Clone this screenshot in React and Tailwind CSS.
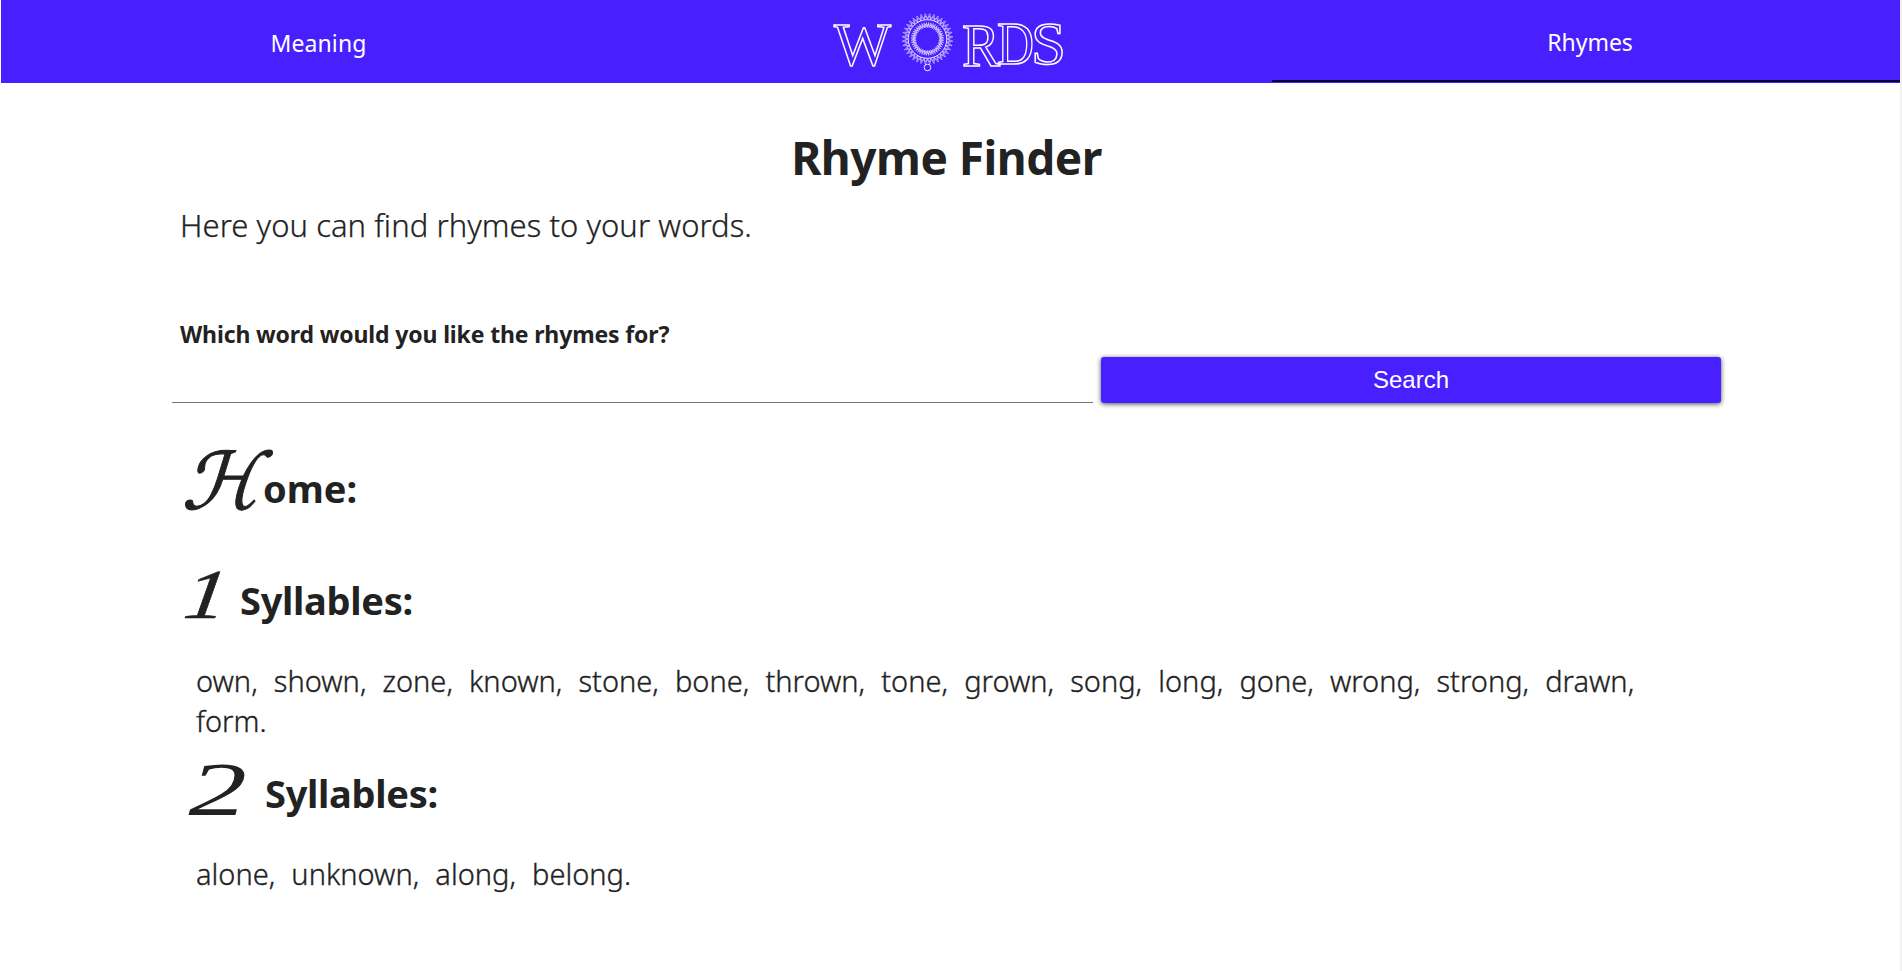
const oneSyllable = [
  "own", "shown", "zone", "known", "stone", "bone", "thrown", "tone",
  "grown", "song", "long", "gone", "wrong", "strong", "drawn", "form",
];
const twoSyllables = ["alone", "unknown", "along", "belong"];

// Closed zigzag around a centre, alternating between two radii.
function burst(cx, cy, inner, outer, count) {
  const points = [];
  for (let i = 0; i < count * 2; i++) {
    const radius = i % 2 === 0 ? inner : outer;
    const angle = (Math.PI * i) / count;
    points.push(
      `${(cx + radius * Math.cos(angle)).toFixed(2)},${(cy + radius * Math.sin(angle)).toFixed(2)}`
    );
  }
  return points.join(" ");
}

function Logo() {
  return (
    <svg
      viewBox="820 0 268 83"
      className="h-[83px] w-[268px] fill-none stroke-white stroke-[1.5]"
      aria-label="Words"
    >
      <g className="font-['Liberation_Serif',serif] text-[62px]">
        <text x="834" y="65" textLength="57" lengthAdjust="spacingAndGlyphs">W</text>
        <text x="962" y="66" textLength="38" lengthAdjust="spacingAndGlyphs">R</text>
        <text x="997" y="64" textLength="37" lengthAdjust="spacingAndGlyphs">D</text>
        <text x="1031" y="64" textLength="35" lengthAdjust="spacingAndGlyphs">S</text>
      </g>
      <g className="stroke-[0.5]">
        <polygon points={burst(927.5, 39, 20.5, 25.5, 36)} />
        <polygon points={burst(927.5, 39, 19.5, 23, 36)} />
        <circle cx="927.5" cy="39" r="19.3" className="stroke-[0.9]" />
        <polygon points={burst(927.5, 39, 11.5, 16.5, 44)} />
        <polygon points={burst(927.5, 39, 12.5, 15, 31)} />
        <circle cx="927.5" cy="67.5" r="3.3" className="stroke-[0.9]" />
      </g>
    </svg>
  );
}

function WordList({ words }) {
  return (
    <p className="mt-5 ml-[24px] flex w-[1460px] flex-wrap gap-x-[16.1px] text-[29px] leading-[40px] font-light [-webkit-text-stroke:0.35px_#222]">
      {words.map((word, i) => (
        <span key={word}>
          {word}
          {i === words.length - 1 ? "." : ","}
        </span>
      ))}
    </p>
  );
}

export default function App() {
  return (
    <div className="min-h-[971px] border-r-2 border-l border-r-[#f1f1f1] border-l-white bg-white font-['Noto_Sans',sans-serif] text-[#222]">
      <header className="flex h-[83px] bg-[#4820ff] text-[23px] text-white">
        <a className="flex w-[635px] items-center justify-center pt-[3px] tracking-[0.1px]">Meaning</a>
        <div className="flex w-[636px] justify-center">
          <Logo />
        </div>
        <a className="flex flex-1 flex-col">
          <span className="flex flex-1 items-center justify-center pt-1 pl-[8px]">Rhymes</span>
          <span className="mb-px h-[2px] bg-[#0b0433]" />
        </a>
      </header>

      <main className="ml-[171px] w-[1549px] pt-[42px]">
        <h1 className="text-center text-[46px] leading-[64px] font-bold tracking-[-0.5px]">
          Rhyme Finder
        </h1>
        <p className="mt-3 ml-2 text-[31px] leading-[48px] font-light tracking-[0.05px] [-webkit-text-stroke:0.25px_#222]">
          Here you can find rhymes to your words.
        </p>

        <form>
          <label htmlFor="word" className="mt-[69px] ml-2 block text-[23px] leading-8 font-bold tracking-[-0.14px]">
            Which word would you like the rhymes for?
          </label>
          <div className="mt-[7px] flex h-[46px] gap-2">
            <input id="word" className="w-[921px] border-b border-[#767676] outline-none" />
            <button
              type="button"
              className="flex-1 rounded-[3px] bg-[#4820ff] pb-px font-['Liberation_Sans',sans-serif] text-2xl text-white shadow-[0_1px_5px_rgba(0,0,0,0.7)]"
            >
              Search
            </button>
          </div>
        </form>

        <h2 className="mt-[45px] ml-[9px] flex h-20 items-center text-[38px] font-bold">
          <svg viewBox="0 0 82 80" className="h-20 w-[82px] overflow-visible fill-[#222] stroke-[#222] stroke-1 font-['DejaVu_Sans',sans-serif] text-[79px] font-normal">
            <text transform="translate(0 61) skewX(-17)">ℋ</text>
          </svg>
          ome:
        </h2>

        <section className="mt-[33px]">
          <h2 className="ml-[9px] flex h-20 items-center pb-[2px] text-[38px] font-bold tracking-[-0.3px]">
            <svg viewBox="0 0 59 80" className="h-20 w-[59px] overflow-visible fill-[#222] stroke-[#222] stroke-[0.6] font-['Liberation_Serif',serif] text-[70px] font-normal italic">
              <text transform="translate(1 58) skewX(-8)" textLength="42" lengthAdjust="spacingAndGlyphs">1</text>
            </svg>
            Syllables:
          </h2>
          <WordList words={oneSyllable} />
        </section>

        <section className="mt-[13px]">
          <h2 className="ml-[9px] flex h-20 items-center pb-[2px] text-[38px] font-bold tracking-[-0.3px]">
            <svg viewBox="0 0 83 80" className="h-20 w-[84px] overflow-visible fill-[#222] font-['Liberation_Serif',serif] text-[76px] font-normal italic">
              <text x="7" y="62" textLength="58" lengthAdjust="spacingAndGlyphs">2</text>
            </svg>
            Syllables:
          </h2>
          <WordList words={twoSyllables} />
        </section>
      </main>
    </div>
  );
}
